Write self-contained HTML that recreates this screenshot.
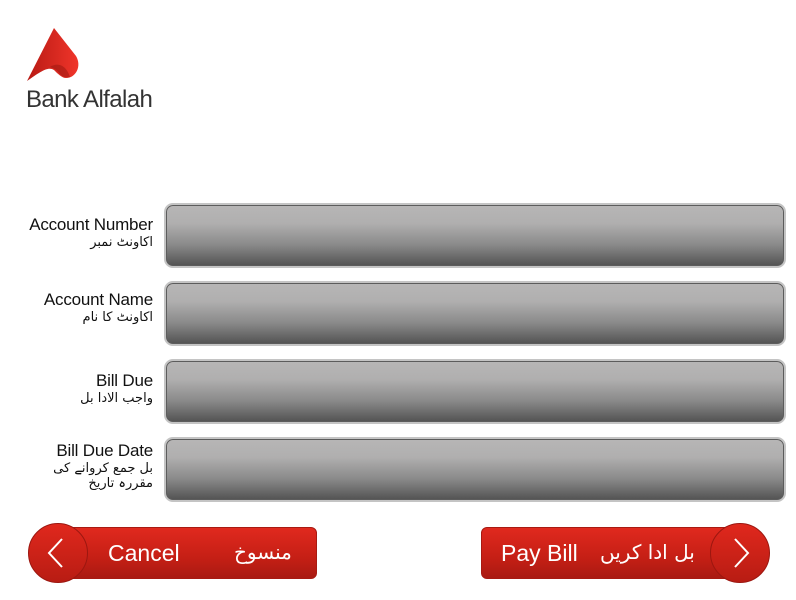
<!DOCTYPE html>
<html><head><meta charset="utf-8"><style>
body{margin:0;width:796px;height:600px;background:#fff;position:relative;overflow:hidden;font-family:"Liberation Sans","DejaVu Sans",sans-serif}
.f{position:absolute;left:164px;width:618px;height:61px;border:2px solid #c4c4c4;border-radius:9px;background:linear-gradient(#b7b6b6 0%,#b0afaf 30%,#8a8a8a 65%,#525252 100%);box-shadow:inset 0 0 0 1px #5c5c5c}
.l{position:absolute;right:643px;text-align:right;color:#111}
.e{font-size:17px;line-height:20px;letter-spacing:-0.2px}
.u{font-family:"DejaVu Sans",sans-serif;font-size:13px;line-height:15px}
.b{position:absolute;top:527px;height:50px;width:270px;border:1px solid #a81a12;border-radius:6px;background:linear-gradient(#e0291e,#c51f15 60%,#a91a12);color:#fff}
.c{position:absolute;top:523px;width:58px;height:58px;border-radius:50%;background:linear-gradient(#e0281d,#b81c13);border:1px solid #9c1710}
.t{position:absolute;top:12px;font-size:23px;color:#fff}
</style></head><body>
<svg style="position:absolute;left:26px;top:27px" width="58" height="58" viewBox="0 0 58 58">
<defs><linearGradient id="g" x1="0" x2="1"><stop offset="0" stop-color="#b81a14"/><stop offset="1" stop-color="#f0352a"/></linearGradient></defs>
<path d="M1 54 L28 1 L50 29 C56 39 50 51 40 51 C36 51 32 47 28 43 C22 39 14 45 1 54Z" fill="url(#g)"/>
<path d="M24 40 C32 35 40 38 44 50 C40 51 36 50 33 46 C30 42 27 41 24 40Z" fill="#8e130e" opacity=".45"/>
</svg>
<div style="position:absolute;left:26px;top:86px;font-size:24px;color:#333;letter-spacing:-0.6px">Bank Alfalah</div>

<div class="f" style="top:203px"></div>
<div class="f" style="top:281px"></div>
<div class="f" style="top:359px"></div>
<div class="f" style="top:437px"></div>

<div class="l" style="top:215px"><div class="e">Account Number</div><div class="u">اکاونٹ نمبر</div></div>
<div class="l" style="top:290px"><div class="e">Account Name</div><div class="u">اکاونٹ کا نام</div></div>
<div class="l" style="top:371px"><div class="e">Bill Due</div><div class="u">واجب الادا بل</div></div>
<div class="l" style="top:441px"><div class="e">Bill Due Date</div><div class="u">بل جمع کروانے کی<br>مقررہ تاریخ</div></div>

<div class="b" style="left:45px"><span class="t" style="left:62px">Cancel</span><span class="t" style="left:188px;font-family:'DejaVu Sans',sans-serif;font-size:20px;top:12px">منسوخ</span></div>
<div class="c" style="left:28px"><svg width="58" height="58"><path d="M33 15 L20 29 L33 43" stroke="#fff" stroke-width="2" fill="none"/></svg></div>

<div class="b" style="left:481px"><span class="t" style="left:19px">Pay Bill</span><span class="t" style="left:118px;font-family:'DejaVu Sans',sans-serif;font-size:20px;top:12px">بل ادا کریں</span></div>
<div class="c" style="left:710px"><svg width="58" height="58"><path d="M24 15 L37 29 L24 43" stroke="#fff" stroke-width="2" fill="none"/></svg></div>
</body></html>
